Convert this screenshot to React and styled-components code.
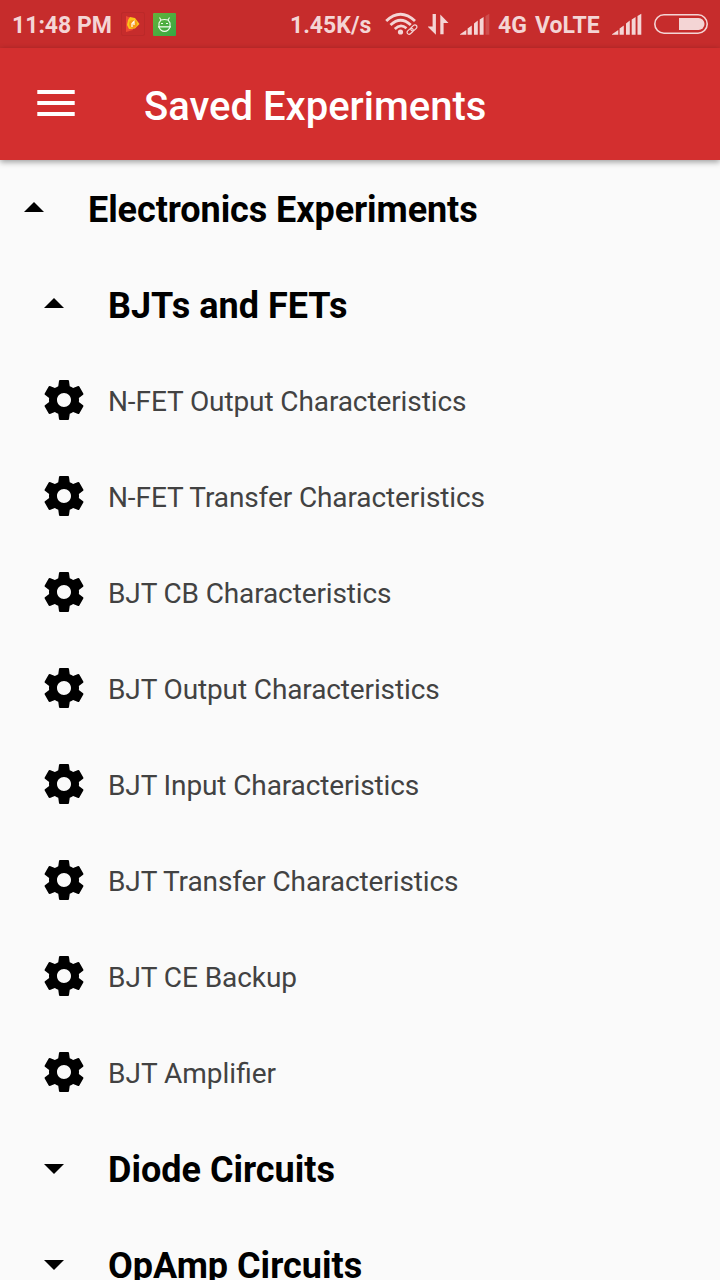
import React from 'react';
import styled, { createGlobalStyle } from 'styled-components';

const GlobalStyle = createGlobalStyle`
  body {
    margin: 0;
    background: #fafafa;
    font-family: Roboto, "Liberation Sans", sans-serif;
  }
`;

const Screen = styled.div`
  width: 720px;
  height: 1280px;
  overflow: hidden;
  display: flex;
  flex-direction: column;
  background: #fafafa;
`;

const StatusBar = styled.header`
  flex: none;
  height: 48px;
  box-sizing: border-box;
  padding: 0 12px;
  display: flex;
  align-items: center;
  justify-content: space-between;
  background: #c62c2c;
  color: #f4d5d5;
`;

const StatusGroup = styled.div`
  height: 48px;
  display: flex;
  align-items: center;
`;

const StatusText = styled.span`
  font-size: 23px;
  line-height: 27px;
  font-weight: 700;
  white-space: nowrap;
  padding-top: 3px;
  width: ${({ $width }) => $width}px;
  margin-right: ${({ $gap = 0 }) => $gap}px;
`;

const StatusIcon = styled.svg`
  display: block;
  flex: none;
  margin-right: ${({ $gap = 0 }) => $gap}px;
`;

const AppBar = styled.div`
  flex: none;
  height: 112px;
  box-sizing: border-box;
  padding: 6px 32px 0;
  display: flex;
  align-items: center;
  background: #d32f2f;
  box-shadow: 0 2px 6px rgba(0, 0, 0, 0.38);
  z-index: 1;
`;

const MenuButton = styled.button`
  width: 48px;
  height: 48px;
  margin: -8px 64px 0 0;
  padding: 0;
  border: 0;
  background: none;
`;

const Title = styled.h1`
  margin: 0;
  color: #fff;
  font-size: 40px;
  line-height: 48px;
  font-weight: 500;
  white-space: nowrap;
`;

const Tree = styled.main`
  flex: 1;
`;

const GroupRow = styled.div`
  height: 96px;
  display: flex;
  align-items: center;
  padding-left: ${({ $level }) => 4 + $level * 20}px;
`;

const Caret = styled.svg`
  display: block;
  width: 60px;
  height: 60px;
  margin-right: 24px;
`;

const GroupLabel = styled.h2`
  margin: 0;
  padding-top: 4px;
  color: #000;
  font-size: 36px;
  line-height: 42px;
  font-weight: 700;
  letter-spacing: ${({ $tracking }) => $tracking}px;
  white-space: nowrap;
`;

const ItemRow = styled.div`
  height: 96px;
  display: flex;
  align-items: center;
  padding-left: 40px;
`;

const Gear = styled.svg`
  display: block;
  width: 48px;
  height: 48px;
  margin-right: 20px;
`;

const ItemLabel = styled.span`
  padding-top: 3px;
  color: #424242;
  font-size: 28px;
  line-height: 34px;
  letter-spacing: ${({ $tracking }) => $tracking}px;
  white-space: nowrap;
`;

const experiments = [
  { name: 'N-FET Output Characteristics', tracking: -0.1 },
  { name: 'N-FET Transfer Characteristics', tracking: -0.1 },
  { name: 'BJT CB Characteristics', tracking: -0.13 },
  { name: 'BJT Output Characteristics', tracking: -0.12 },
  { name: 'BJT Input Characteristics', tracking: -0.11 },
  { name: 'BJT Transfer Characteristics', tracking: -0.11 },
  { name: 'BJT CE Backup', tracking: -0.06 },
  { name: 'BJT Amplifier', tracking: 0 },
];

function Group({ label, level, open, tracking = 0 }) {
  return (
    <GroupRow $level={level}>
      <Caret viewBox="0 0 60 60">
        <path d={open ? 'M20 34L30 24L40 34Z' : 'M20 26L30 36L40 26Z'} />
      </Caret>
      <GroupLabel $tracking={tracking}>{label}</GroupLabel>
    </GroupRow>
  );
}

function Item({ label, tracking }) {
  return (
    <ItemRow>
      <Gear viewBox="0 0 24 24">
        <path d="M19.43 12.98c.04-.32.07-.64.07-.98s-.03-.66-.07-.98l2.11-1.65c.19-.15.24-.42.12-.64l-2-3.46c-.12-.22-.39-.3-.61-.22l-2.49 1c-.52-.4-1.08-.73-1.69-.98l-.38-2.65C14.46 2.18 14.25 2 14 2h-4c-.25 0-.46.18-.49.42l-.38 2.65c-.61.25-1.17.59-1.69.98l-2.49-1c-.23-.09-.49 0-.61.22l-2 3.46c-.13.22-.07.49.12.64l2.11 1.65c-.04.32-.07.65-.07.98s.03.66.07.98l-2.11 1.65c-.19.15-.24.42-.12.64l2 3.46c.12.22.39.3.61.22l2.49-1c.52.4 1.08.73 1.69.98l.38 2.65c.03.24.24.42.49.42h4c.25 0 .46-.18.49-.42l.38-2.65c.61-.25 1.17-.59 1.69-.98l2.49 1c.23.09.49 0 .61-.22l2-3.46c.12-.22.07-.49-.12-.64l-2.11-1.65zM12 15.5c-1.93 0-3.5-1.57-3.5-3.5s1.57-3.5 3.5-3.5 3.5 1.57 3.5 3.5-1.57 3.5-3.5 3.5z" />
      </Gear>
      <ItemLabel $tracking={tracking}>{label}</ItemLabel>
    </ItemRow>
  );
}

function Signal({ full, gap }) {
  return (
    <StatusIcon $gap={gap} width="30" height="48" fill="currentColor">
      <path d="M-0.5 34.7L6.3 30V34.7ZM7.6 28.5L11.8 25.5V34.7H7.6ZM14 23.5L17.8 20.5V34.7H14ZM19.7 19.5L23.6 17V34.7H19.7Z" />
      <path d="M25.5 16L29.3 13.8V34.7H25.5Z" opacity={full ? 1 : 0.2} />
    </StatusIcon>
  );
}

export default function App() {
  return (
    <Screen>
      <GlobalStyle />
      <StatusBar>
        <StatusGroup>
          <StatusText $width={99} $gap={10}>11:48 PM</StatusText>
          <StatusIcon width="24" height="24" $gap={8}>
            <rect x="0.5" y="0.5" width="23" height="23" rx="1.5" fill="none" stroke="#bb2929" />
            <path d="M5 4L9 5.5L12 18L5 20Z" fill="#ef4a35" />
            <path d="M9 5L14 6L18.5 12L14 16.5L8 17L6 13L7 8Z" fill="#fcc419" />
            <circle cx="12" cy="12" r="4" fill="#f79a16" />
            <path d="M11 15V11.5L13 9.5V13" fill="none" stroke="#fff" strokeWidth="1.2" />
          </StatusIcon>
          <StatusIcon width="23" height="23" viewBox="0 0 23 23">
            <defs>
              <linearGradient id="robotFill" x1="0" y1="0" x2="1" y2="1">
                <stop offset="0" stopColor="#65b33b" />
                <stop offset="1" stopColor="#35a844" />
              </linearGradient>
            </defs>
            <rect width="23" height="23" rx="1" fill="url(#robotFill)" />
            <g fill="none" stroke="#effbea" strokeWidth="1.1">
              <path d="M6.5 4.5L8 7M16.5 4.5L15 7M8 7Q11.5 6 15 7L17 10V14Q15.5 18.4 11.5 18.4Q7.5 18.4 6 14V10Z" />
              <path d="M8 10.5H10M13 10.5H15" />
              <path d="M5 13.8H18" strokeWidth="1.6" opacity="0.8" />
            </g>
          </StatusIcon>
        </StatusGroup>
        <StatusGroup>
          <StatusText $width={82} $gap={13}>1.45K/s</StatusText>
          <StatusIcon width="34" height="48" $gap={9} fill="none" stroke="currentColor">
            <path d="M1.2 21Q15.5 7.5 30 21" strokeWidth="2.8" />
            <path d="M5.5 25Q15.5 15.5 25.8 25" strokeWidth="2.8" />
            <path d="M9.8 29Q15.5 23 21.5 28.2" strokeWidth="2.6" />
            <circle cx="15.5" cy="32" r="2.6" fill="currentColor" stroke="none" />
            <g transform="translate(27 29.6) rotate(-43)" strokeWidth="1.2">
              <rect x="-6" y="-2" width="7" height="4" rx="2" />
              <rect x="-1" y="-2" width="7" height="4" rx="2" />
            </g>
          </StatusIcon>
          <StatusIcon width="22" height="48" $gap={10} fill="currentColor">
            <path d="M4.6 14H7.9V34.7L-0.3 26.6H4.6ZM12.3 14.5L20.5 23H15.6V34.3H12.3Z" />
          </StatusIcon>
          <Signal gap={8} />
          <StatusText $width={29} $gap={8}>4G</StatusText>
          <StatusText $width={64} $gap={13}>VoLTE</StatusText>
          <Signal full gap={12} />
          <StatusIcon width="54" height="48">
            <rect x="0.8" y="14.8" width="52.4" height="18.4" rx="9.2" fill="none" stroke="currentColor" strokeWidth="1.6" />
            <path d="M25 18H44.5A6 6 0 0 1 44.5 30H25Z" fill="currentColor" />
          </StatusIcon>
        </StatusGroup>
      </StatusBar>
      <AppBar>
        <MenuButton aria-label="Menu">
          <svg width="48" height="48" fill="#fff">
            <path d="M5.3 11H42.7V15H5.3ZM5.3 22H42.7V26H5.3ZM5.3 33H42.7V37H5.3Z" />
          </svg>
        </MenuButton>
        <Title>Saved Experiments</Title>
      </AppBar>
      <Tree>
        <Group label="Electronics Experiments" level={0} open tracking={-0.08} />
        <Group label="BJTs and FETs" level={1} open />
        {experiments.map(({ name, tracking }) => (
          <Item key={name} label={name} tracking={tracking} />
        ))}
        <Group label="Diode Circuits" level={1} />
        <Group label="OpAmp Circuits" level={1} />
      </Tree>
    </Screen>
  );
}
